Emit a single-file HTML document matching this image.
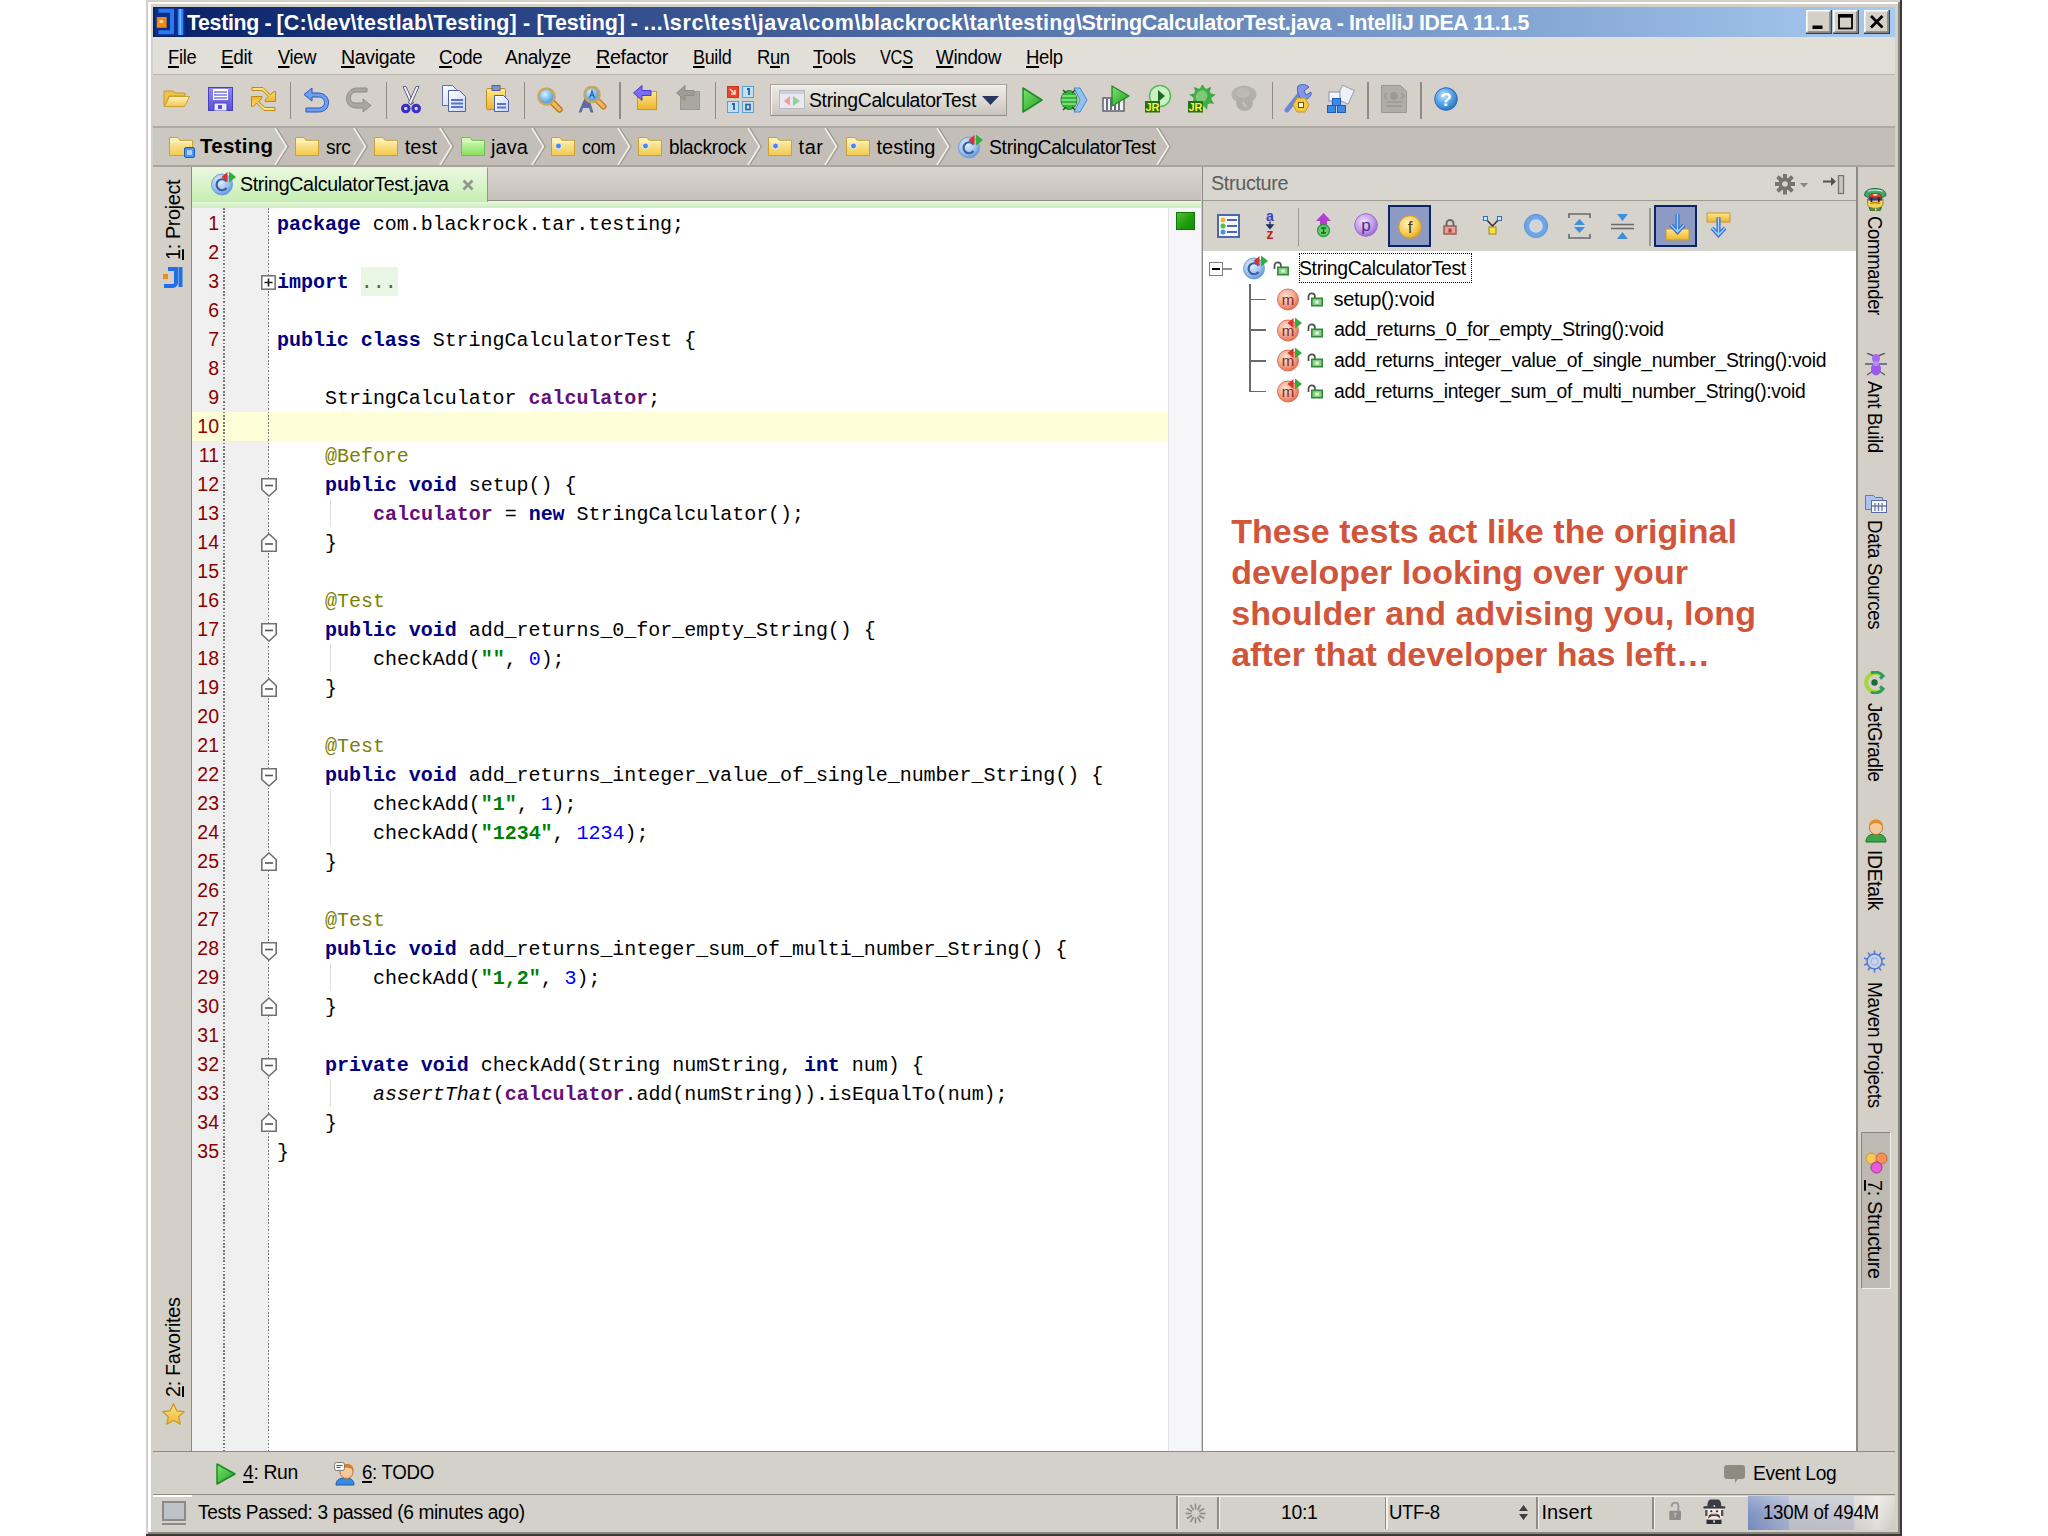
<!DOCTYPE html>
<html lang="en"><head><meta charset="utf-8"><title>Testing - IntelliJ IDEA 11.1.5</title>
<style>
html,body{margin:0;padding:0;background:#fff;}
body{width:2048px;height:1536px;position:relative;overflow:hidden;font-family:"Liberation Sans", "DejaVu Sans", sans-serif;font-size:19.5px;color:#000;}
.b{position:absolute;box-sizing:border-box;}
.t{position:absolute;white-space:pre;}
.m{font-family:"Liberation Mono", "DejaVu Sans Mono", monospace;}
u{text-decoration:underline;text-underline-offset:1.800px;text-decoration-thickness:1.500px;}
</style></head>
<body>
<div class="b" style="left:146px;top:0px;width:1755.8px;height:1536px;background:#d4d0c8;"></div>
<div class="b" style="left:148px;top:1.7px;width:2.5px;height:1530px;background:#ffffff;"></div>
<div class="b" style="left:148px;top:1.7px;width:1750px;height:2px;background:#ffffff;"></div>
<div class="b" style="left:1897.9px;top:2px;width:2.1px;height:1533px;background:#8a8680;"></div>
<div class="b" style="left:1899.9px;top:0px;width:1.9px;height:1536px;background:#3c3835;"></div>
<div class="b" style="left:148px;top:1532px;width:1752px;height:2.4px;background:#8a8680;"></div>
<div class="b" style="left:146px;top:1534.3px;width:1755.8px;height:1.7px;background:#3c3835;"></div>
<div class="b" style="left:153px;top:7px;width:1742px;height:30px;background:linear-gradient(90deg,#0a246a 0%,#0a246a 2%,#a6caf0 100%);"></div>
<div class="b" style="left:153px;top:37px;width:1742px;height:37px;background:#e2dfd8;"></div>
<div class="b" style="left:153px;top:74px;width:1742px;height:1px;background:#b9b5ae;"></div>
<div class="b" style="left:153px;top:75px;width:1742px;height:51px;background:#d5d1ca;"></div>
<div class="b" style="left:153px;top:126px;width:1742px;height:2px;background:#aeaaa3;"></div>
<div class="b" style="left:153px;top:128px;width:1742px;height:37px;background:#c3bfb8;"></div>
<div class="b" style="left:153px;top:165px;width:1742px;height:2px;background:#a9a59e;"></div>
<svg width="0" height="0" style="position:absolute"><defs><linearGradient id="gFold" x1="0" y1="0" x2="0" y2="1"><stop offset="0" stop-color="#fdf3bd"/><stop offset="1" stop-color="#f3c94d"/></linearGradient><linearGradient id="gFoldG" x1="0" y1="0" x2="0" y2="1"><stop offset="0" stop-color="#d9fbbf"/><stop offset="1" stop-color="#86e05e"/></linearGradient><linearGradient id="gSave" x1="0" y1="0" x2="0" y2="1"><stop offset="0" stop-color="#8f8bf5"/><stop offset="1" stop-color="#5a4fd8"/></linearGradient><linearGradient id="gBlue" x1="0" y1="0" x2="0" y2="1"><stop offset="0" stop-color="#8db8f5"/><stop offset="1" stop-color="#2d62c9"/></linearGradient><linearGradient id="gGreen" x1="0" y1="0" x2="1" y2="1"><stop offset="0" stop-color="#7be66f"/><stop offset="1" stop-color="#1f9a24"/></linearGradient><linearGradient id="gDoc" x1="0" y1="0" x2="1" y2="1"><stop offset="0" stop-color="#ffffff"/><stop offset="1" stop-color="#c9d6f7"/></linearGradient><linearGradient id="gYel" x1="0" y1="0" x2="0" y2="1"><stop offset="0" stop-color="#fde88a"/><stop offset="1" stop-color="#eeb52f"/></linearGradient><radialGradient id="rCls" cx="0.4" cy="0.35" r="0.7"><stop offset="0" stop-color="#e4f0fd"/><stop offset="0.6" stop-color="#9fc4ee"/><stop offset="1" stop-color="#5c8fd6"/></radialGradient><radialGradient id="rMeth" cx="0.4" cy="0.35" r="0.7"><stop offset="0" stop-color="#fde3d8"/><stop offset="0.55" stop-color="#f6a991"/><stop offset="1" stop-color="#e0684c"/></radialGradient><radialGradient id="rHelp" cx="0.4" cy="0.35" r="0.7"><stop offset="0" stop-color="#bfe3fb"/><stop offset="0.5" stop-color="#5aa8e6"/><stop offset="1" stop-color="#2a6dc0"/></radialGradient><radialGradient id="rP" cx="0.4" cy="0.35" r="0.7"><stop offset="0" stop-color="#efe0fb"/><stop offset="0.6" stop-color="#c39be8"/><stop offset="1" stop-color="#9a63cf"/></radialGradient><radialGradient id="rF" cx="0.4" cy="0.35" r="0.7"><stop offset="0" stop-color="#fff3c2"/><stop offset="0.6" stop-color="#f7cf57"/><stop offset="1" stop-color="#e3a21c"/></radialGradient><radialGradient id="rLens" cx="0.4" cy="0.35" r="0.7"><stop offset="0" stop-color="#d9f0ff"/><stop offset="0.6" stop-color="#6db7ee"/><stop offset="1" stop-color="#3d8bd6"/></radialGradient><linearGradient id="gCombo" x1="0" y1="0" x2="0" y2="1"><stop offset="0" stop-color="#eceae4"/><stop offset="0.5" stop-color="#dedbd4"/><stop offset="1" stop-color="#cbc7bf"/></linearGradient></defs></svg>
<svg class="b" style="left:154.8px;top:8px;" width="30" height="28" viewBox="0 0 30 28"><rect x="0" y="0" width="30" height="28" fill="#0c2c86"/><path d="M3.500 2.800h13.500v21.500H3.500" fill="none" stroke="#2a78f2" stroke-width="4"/><rect x="22.800" y="1" width="5.500" height="26" fill="#2f84ff"/><rect x="24.500" y="1" width="1.500" height="26" fill="#7fb8ff"/><rect x="1.800" y="9" width="9.800" height="10.800" fill="#f08a14"/><rect x="4.500" y="12" width="3.500" height="3" fill="#ffd28a"/></svg>
<span class="t ttl" style="left:186.8px;top:13.1px;font-size:21.5px;line-height:21.5px;color:#fff;font-weight:bold;letter-spacing:-0.350px;transform-origin:0 0;transform:scaleX(0.992);">Testing - </span>
<span class="t ttl" style="left:276.5px;top:13.1px;font-size:21.5px;line-height:21.5px;color:#fff;font-weight:bold;letter-spacing:0.177px;">[C:\dev\testlab\Testing] - </span>
<span class="t ttl" style="left:536.5px;top:13.1px;font-size:21.5px;line-height:21.5px;color:#fff;font-weight:bold;letter-spacing:-0.098px;">[Testing] - </span>
<span class="t ttl" style="left:643.6px;top:13.1px;font-size:21.5px;line-height:21.5px;color:#fff;font-weight:bold;letter-spacing:0.596px;">...\src\test\java\com</span>
<span class="t ttl" style="left:854.5px;top:13.1px;font-size:21.5px;line-height:21.5px;color:#fff;font-weight:bold;letter-spacing:0.233px;">\blackrock\tar\testing</span>
<span class="t ttl" style="left:1075.9px;top:13.1px;font-size:21.5px;line-height:21.5px;color:#fff;font-weight:bold;letter-spacing:-0.326px;">\StringCalculatorTest.java - </span>
<span class="t ttl" style="left:1349.2px;top:13.1px;font-size:21.5px;line-height:21.5px;color:#fff;font-weight:bold;letter-spacing:-0.350px;transform-origin:0 0;transform:scaleX(0.987);">IntelliJ IDEA 11.1.5</span>
<svg class="b" style="left:1806px;top:10px;" width="26" height="24" viewBox="0 0 26 24"><rect x="0" y="0" width="26" height="24" fill="#d4d0c8"/><path d="M0.800 23.500V0.800h24.700" stroke="#fff" stroke-width="1.600" fill="none"/><path d="M25.300 0v23.300H0" stroke="#404040" stroke-width="1.500" fill="none"/><path d="M23.900 1.600v20.300H1.600" stroke="#808080" stroke-width="1.400" fill="none"/><rect x="6.500" y="15.500" width="10" height="3.500" fill="#000"/></svg>
<svg class="b" style="left:1833px;top:10px;" width="26" height="24" viewBox="0 0 26 24"><rect x="0" y="0" width="26" height="24" fill="#d4d0c8"/><path d="M0.800 23.500V0.800h24.700" stroke="#fff" stroke-width="1.600" fill="none"/><path d="M25.300 0v23.300H0" stroke="#404040" stroke-width="1.500" fill="none"/><path d="M23.900 1.600v20.300H1.600" stroke="#808080" stroke-width="1.400" fill="none"/><rect x="6" y="5" width="13" height="13.500" fill="none" stroke="#000" stroke-width="1.800"/><rect x="5.100" y="4" width="14.800" height="3.600" fill="#000"/></svg>
<svg class="b" style="left:1864px;top:10px;" width="26" height="24" viewBox="0 0 26 24"><rect x="0" y="0" width="26" height="24" fill="#d4d0c8"/><path d="M0.800 23.500V0.800h24.700" stroke="#fff" stroke-width="1.600" fill="none"/><path d="M25.300 0v23.300H0" stroke="#404040" stroke-width="1.500" fill="none"/><path d="M23.900 1.600v20.300H1.600" stroke="#808080" stroke-width="1.400" fill="none"/><path d="M7 6l11.500 11.500M18.500 6 7 17.500" stroke="#000" stroke-width="2.800"/></svg>
<span class="t mn" style="left:168.4px;top:47.4px;font-size:20px;line-height:20px;letter-spacing:-0.350px;transform-origin:0 0;transform:scaleX(0.916);"><u>F</u>ile</span>
<span class="t mn" style="left:221.4px;top:47.4px;font-size:20px;line-height:20px;letter-spacing:-0.350px;transform-origin:0 0;transform:scaleX(0.945);"><u>E</u>dit</span>
<span class="t mn" style="left:278.0px;top:47.4px;font-size:20px;line-height:20px;letter-spacing:-0.350px;transform-origin:0 0;transform:scaleX(0.915);"><u>V</u>iew</span>
<span class="t mn" style="left:341.4px;top:47.4px;font-size:20px;line-height:20px;letter-spacing:-0.350px;transform-origin:0 0;transform:scaleX(0.975);"><u>N</u>avigate</span>
<span class="t mn" style="left:438.6px;top:47.4px;font-size:20px;line-height:20px;letter-spacing:-0.350px;transform-origin:0 0;transform:scaleX(0.932);"><u>C</u>ode</span>
<span class="t mn" style="left:505.0px;top:47.4px;font-size:20px;line-height:20px;letter-spacing:-0.350px;transform-origin:0 0;transform:scaleX(0.956);">Analy<u>z</u>e</span>
<span class="t mn" style="left:595.7px;top:47.4px;font-size:20px;line-height:20px;letter-spacing:-0.350px;transform-origin:0 0;transform:scaleX(0.988);"><u>R</u>efactor</span>
<span class="t mn" style="left:693.0px;top:47.4px;font-size:20px;line-height:20px;letter-spacing:-0.350px;transform-origin:0 0;transform:scaleX(0.897);"><u>B</u>uild</span>
<span class="t mn" style="left:756.5px;top:47.4px;font-size:20px;line-height:20px;letter-spacing:-0.350px;transform-origin:0 0;transform:scaleX(0.919);">R<u>u</u>n</span>
<span class="t mn" style="left:813.4px;top:47.4px;font-size:20px;line-height:20px;letter-spacing:-0.350px;transform-origin:0 0;transform:scaleX(0.951);"><u>T</u>ools</span>
<span class="t mn" style="left:879.7px;top:47.4px;font-size:20px;line-height:20px;letter-spacing:-0.350px;transform-origin:0 0;transform:scaleX(0.817);">VC<u>S</u></span>
<span class="t mn" style="left:936.0px;top:47.4px;font-size:20px;line-height:20px;letter-spacing:-0.350px;transform-origin:0 0;transform:scaleX(0.941);"><u>W</u>indow</span>
<span class="t mn" style="left:1026.3px;top:47.4px;font-size:20px;line-height:20px;letter-spacing:-0.350px;transform-origin:0 0;transform:scaleX(0.927);"><u>H</u>elp</span>
<svg class="b" style="left:163px;top:88px;" width="28" height="20" viewBox="0 0 28 20"><path d="M1 3h9l2 2h10v3H6l-4 10H1z" fill="#f0c24a" stroke="#c39a2d"/><path d="M6.5 8.5h20l-5 10H1.5z" fill="url(#gFold)" stroke="#c9a135"/></svg>
<svg class="b" style="left:207.5px;top:87px;" width="25" height="24" viewBox="0 0 25 24"><rect x="0.5" y="0.5" width="24" height="23" fill="url(#gSave)" stroke="#4a40b8"/><rect x="5" y="2" width="15" height="11" fill="#fff"/><path d="M6 5h13M6 8h13M6 11h13" stroke="#7a74e8" stroke-width="1.6"/><rect x="6" y="16" width="13" height="8" fill="#e9e7fb" stroke="#4a40b8"/><rect x="10" y="18" width="4" height="4" fill="#5a4fd8"/></svg>
<svg class="b" style="left:251px;top:86.8px;" width="25" height="24" viewBox="0 0 25 24"><path d="M1 0.500h11l7.500 7.500 2.500-3 2.500-0.500v10h-10.500l0.500-2.500 3-2.500-6.500-6h-10z" fill="url(#gYel)" stroke="#b98a1e" stroke-linejoin="round"/><g transform="rotate(180 12.500 12)"><path d="M1 0.500h11l7.500 7.500 2.500-3 2.500-0.500v10h-10.500l0.500-2.500 3-2.500-6.500-6h-10z" fill="url(#gYel)" stroke="#b98a1e" stroke-linejoin="round"/></g></svg>
<div class="b" style="left:289.8px;top:82px;width:1.500px;height:37px;background:#8f8c86;"></div>
<svg class="b" style="left:303px;top:87px;" width="27" height="26" viewBox="0 0 27 26"><path d="M9 1 1 7.5 9 14v-4h6c4 0 6.5 2 6.5 5.5S19 21 15 21H3v4h12c7 0 10.500-4 10.500-9.500S21 6 15 6H9z" fill="#6c9ff0" stroke="#2c55b8" stroke-linejoin="round"/></svg>
<svg class="b" style="left:345.5px;top:87px;" width="27" height="26" viewBox="0 0 27 26"><g transform="translate(26,0) scale(-1,1)"><path d="M9 12 1 18.500 9 25v-4h6c7 0 10.500-4 10.500-9.500S21 1 15 1H5v4h10c4 0 6.500 2 6.500 6S19 16 15 16H9z" fill="#a9a6a0" stroke="#8f8c86" stroke-linejoin="round"/></g></svg>
<div class="b" style="left:385.8px;top:82px;width:1.500px;height:37px;background:#8f8c86;"></div>
<svg class="b" style="left:400.5px;top:85.5px;" width="20" height="28" viewBox="0 0 20 28"><path d="M2 0.500 5 0.500 12.500 17 10 18.500z" fill="#f4f6fd" stroke="#5d5f78" stroke-width="1"/><path d="M18 0.500 15 0.500 7.500 17 10 18.500z" fill="#f4f6fd" stroke="#5d5f78" stroke-width="1"/><circle cx="4.800" cy="22.500" r="3.300" fill="#cfd0f5" stroke="#3a2fc0" stroke-width="3"/><circle cx="15.200" cy="22.500" r="3.300" fill="#cfd0f5" stroke="#3a2fc0" stroke-width="3"/></svg>
<svg class="b" style="left:441.5px;top:85px;" width="25" height="28" viewBox="0 0 25 28"><path d="M0.500 0.500h10l4 4v16h-14z" fill="url(#gDoc)" stroke="#5d6fb5"/><path d="M6.500 5.500h11l6 6v15h-17z" fill="url(#gDoc)" stroke="#4d5fa8"/><path d="M9 15h12M9 18.500h12M9 22h12" stroke="#5b73c9" stroke-width="1.800"/></svg>
<svg class="b" style="left:485.5px;top:85px;" width="24" height="28" viewBox="0 0 24 28"><rect x="0.500" y="3.500" width="19" height="21" rx="1" fill="url(#gYel)" stroke="#b98c2a"/><rect x="6" y="0.500" width="8" height="5" fill="#8a8fc8" stroke="#4d5fa8"/><path d="M8.500 10.500h9l5 5v11h-14z" fill="url(#gDoc)" stroke="#4d5fa8"/><path d="M11 19h9M11 22.500h9" stroke="#5b73c9" stroke-width="1.800"/></svg>
<div class="b" style="left:523.8px;top:82px;width:1.500px;height:37px;background:#8f8c86;"></div>
<svg class="b" style="left:537px;top:86.5px;" width="27" height="27" viewBox="0 0 27 27"><path d="M16 16l6.500 6.500" stroke="#b57a2a" stroke-width="6.500" stroke-linecap="round"/><path d="M16 16l6.500 6.500" stroke="#f3b55a" stroke-width="3.800" stroke-linecap="round"/><circle cx="9.500" cy="9.500" r="8" fill="url(#rLens)" stroke="#c9a660" stroke-width="2.600"/></svg>
<svg class="b" style="left:577.5px;top:86px;" width="29" height="27" viewBox="0 0 29 27"><path d="M0.500 26.500 7 11h3.500l5 15.500h-3l-1.300-4.500H5l-1.500 4.500z" fill="#5e6ba8"/><path d="M20 15l5.500 5.500" stroke="#b57a2a" stroke-width="6" stroke-linecap="round"/><path d="M20 15l5.500 5.500" stroke="#f3b55a" stroke-width="3.400" stroke-linecap="round"/><circle cx="14" cy="8.500" r="7.500" fill="url(#rLens)" stroke="#c9a660" stroke-width="2.600"/><path d="M11.500 12 14 5l2.500 7M12.500 9.500h3" stroke="#2f5fae" stroke-width="1.300" fill="none"/></svg>
<div class="b" style="left:619.3px;top:82px;width:1.500px;height:37px;background:#8f8c86;"></div>
<svg class="b" style="left:632.5px;top:85px;" width="25" height="26" viewBox="0 0 25 26"><rect x="4.500" y="6.500" width="19" height="18" fill="url(#gYel)" stroke="#c49a2e"/><path d="M9 0.500 0.500 8 9 15.500v-5h9v-5H9z" fill="#7c6df0" stroke="#4a3cc8" stroke-linejoin="round"/></svg>
<svg class="b" style="left:675.5px;top:85px;" width="25" height="26" viewBox="0 0 25 26"><rect x="4.500" y="6.500" width="19" height="18" fill="#aaa7a1" stroke="#9a9791"/><path d="M9 0.500 0.500 8 9 15.500v-5h9v-5H9z" fill="#9f9c96" stroke="#8f8c86" stroke-linejoin="round"/></svg>
<div class="b" style="left:714.8px;top:82px;width:1.500px;height:37px;background:#8f8c86;"></div>
<svg class="b" style="left:727px;top:85.5px;" width="27" height="27" viewBox="0 0 27 27"><rect x="0.500" y="0.500" width="11" height="11" fill="#e8452c" stroke="#c23a22"/><path d="M3 3l5 5M8 4v4H4" stroke="#ffd9c9" stroke-width="1.600" fill="none"/><rect x="15.500" y="0.500" width="11" height="11" fill="#bfe0f5" stroke="#5f9fc9"/><rect x="0.500" y="15.500" width="11" height="11" fill="#bfe0f5" stroke="#5f9fc9"/><rect x="15.500" y="15.500" width="11" height="11" fill="#bfe0f5" stroke="#5f9fc9"/><path d="M20 3h2v6M5 18h2v6" stroke="#2f5f9a" stroke-width="1.800" fill="none"/><rect x="19" y="18.500" width="4" height="5" fill="none" stroke="#2f5f9a" stroke-width="1.600"/></svg>
<div class="b" style="left:770px;top:84px;width:237px;height:32px;background:linear-gradient(#edebe5,#dcd9d2 55%,#c9c5bd);border:1px solid #a7a49d;border-bottom-color:#8f8c86;border-right-color:#9a9791;box-shadow:inset 1px 1px 0 #f6f5f1;"></div>
<svg class="b" style="left:778.5px;top:89.5px;" width="26" height="19" viewBox="0 0 26 19"><rect x="0.500" y="0.500" width="25" height="18" fill="#e9e8ee" stroke="#b9b7c0"/><rect x="1" y="1" width="24" height="3" fill="#c9cfe6"/><path d="M11 6v10l-6-5z" fill="#f0a09a"/><path d="M14 6v10l7-5z" fill="#8fd39a"/></svg>
<span class="t sct" style="left:808.6px;top:89.6px;font-size:20px;line-height:20px;letter-spacing:-0.350px;transform-origin:0 0;transform:scaleX(0.971);">StringCalculatorTest</span>
<svg class="b" style="left:982px;top:95.5px;" width="17" height="9" viewBox="0 0 17 9"><path d="M0 0h17L8.500 9z" fill="#27375f"/></svg>
<svg class="b" style="left:1022px;top:86.5px;" width="21" height="26" viewBox="0 0 21 26"><path d="M1 1 20 13.0 1 25z" fill="url(#gGreen)" stroke="#1e8a22" stroke-width="1.500" stroke-linejoin="round"/></svg>
<svg class="b" style="left:1059.5px;top:86.5px;" width="28" height="26" viewBox="0 0 28 26"><path d="M14 1h6l7 12-7 12h-6l6-12z" fill="#8fc3f2" stroke="#4a86d0"/><ellipse cx="9" cy="13" rx="8" ry="9.500" fill="#35b53a" stroke="#1e7a24"/><path d="M2 9h14M1.500 13h15M2 17h14" stroke="#8ee68a" stroke-width="1.600"/><path d="M3 3 6 6M3 23l3-3M15 3l-3 3M15 23l-3-3" stroke="#2a5a2c" stroke-width="1.500"/></svg>
<svg class="b" style="left:1102px;top:85px;" width="28" height="27" viewBox="0 0 28 27"><rect x="1" y="13" width="21" height="13" fill="#f2f2f2" stroke="#5c6070" stroke-width="1.500"/><path d="M5 14v11M9 14v11M13 14v11M17 14v11" stroke="#5c6070" stroke-width="1.800"/><path d="M10 1 27 11 10 21z" fill="url(#gGreen)" stroke="#1e8a22" stroke-width="1.300" stroke-linejoin="round"/></svg>
<svg class="b" style="left:1145px;top:85px;" width="27" height="28" viewBox="0 0 27 28"><circle cx="15" cy="11" r="10.500" fill="#c9efc2" stroke="#59b85a" stroke-width="1.500"/><path d="M13 5 20 11 13 17z" fill="#1d6a22"/><rect x="0" y="16" width="15" height="11.500" fill="#256f14"/><text x="7.500" y="26" font-family="Liberation Sans, sans-serif" font-size="11" font-weight="bold" fill="#f6f23a" text-anchor="middle">JR</text></svg>
<svg class="b" style="left:1187.5px;top:85px;" width="28" height="28" viewBox="0 0 28 28"><path d="M14.500 -1.500 17 4h-5z" transform="rotate(0 14.500 12)" fill="#35a83c"/><path d="M14.500 -1.500 17 4h-5z" transform="rotate(40 14.500 12)" fill="#35a83c"/><path d="M14.500 -1.500 17 4h-5z" transform="rotate(80 14.500 12)" fill="#35a83c"/><path d="M14.500 -1.500 17 4h-5z" transform="rotate(120 14.500 12)" fill="#35a83c"/><path d="M14.500 -1.500 17 4h-5z" transform="rotate(160 14.500 12)" fill="#35a83c"/><path d="M14.500 -1.500 17 4h-5z" transform="rotate(200 14.500 12)" fill="#35a83c"/><path d="M14.500 -1.500 17 4h-5z" transform="rotate(240 14.500 12)" fill="#35a83c"/><path d="M14.500 -1.500 17 4h-5z" transform="rotate(280 14.500 12)" fill="#35a83c"/><path d="M14.500 -1.500 17 4h-5z" transform="rotate(320 14.500 12)" fill="#35a83c"/><circle cx="14.500" cy="12" r="9.300" fill="#3fae45"/><ellipse cx="13.500" cy="11.500" rx="5.500" ry="6.500" transform="rotate(35 13.500 11.500)" fill="#7cc97a"/><rect x="0" y="16" width="15" height="11.500" fill="#256f14"/><text x="7.500" y="26" font-family="Liberation Sans, sans-serif" font-size="11" font-weight="bold" fill="#f6f23a" text-anchor="middle">JR</text></svg>
<svg class="b" style="left:1231px;top:85px;" width="27" height="27" viewBox="0 0 27 27"><ellipse cx="13" cy="9.500" rx="12.500" ry="9" fill="#b4b1ab"/><ellipse cx="13.500" cy="18" rx="8.500" ry="8" fill="#b0ada7"/><ellipse cx="12" cy="8" rx="7" ry="5" fill="#bcb9b3"/><path d="M12 17l3 5" stroke="#c9c6c0" stroke-width="2"/></svg>
<div class="b" style="left:1271.8px;top:82px;width:1.500px;height:37px;background:#8f8c86;"></div>
<svg class="b" style="left:1283.5px;top:84px;" width="28" height="29" viewBox="0 0 28 29"><path d="M3 26 16 10" stroke="#6f86d8" stroke-width="5" stroke-linecap="round"/><path d="M14 2c3-2 8-2 11 1l-5 4 2 4 5-3c1 4-3 8-8 7-4-1-7-7-5-13z" fill="#7f97e6" stroke="#4a62c0"/><path d="M13 14h8l4 7-4 7h-8l-4-7z" fill="#f4c93a" stroke="#c9962a"/><rect x="14.500" y="18.500" width="5" height="5" fill="#fff6d0" stroke="#6a5a1a"/></svg>
<svg class="b" style="left:1325.5px;top:84.5px;" width="29" height="28" viewBox="0 0 29 28"><rect x="13" y="2" width="13" height="15" transform="rotate(25 19 9)" fill="#eef1f8" stroke="#9a9fb0"/><rect x="3" y="7" width="11" height="9" fill="#f5f6fb" stroke="#8a8fa5"/><rect x="6.500" y="13.500" width="8" height="7" fill="#3b8ae6" stroke="#1d5cb8"/><rect x="1.500" y="20.500" width="8" height="7" fill="#3b8ae6" stroke="#1d5cb8"/><rect x="11.500" y="20.500" width="8" height="7" fill="#3b8ae6" stroke="#1d5cb8"/></svg>
<div class="b" style="left:1367.3px;top:82px;width:1.500px;height:37px;background:#8f8c86;"></div>
<svg class="b" style="left:1381px;top:85px;" width="26" height="28" viewBox="0 0 26 28"><path d="M0.500 0.500h19l6 6v21h-25z" fill="#b0ada7" stroke="#9a9791"/><circle cx="13" cy="11" r="4" fill="#9d9a94"/><path d="M5 17h16M5 21h16" stroke="#9a9791" stroke-width="1.500"/><path d="M6 8 3 11l3 3M20 8l3 3-3 3" stroke="#9a9791" stroke-width="1.300" fill="none"/></svg>
<div class="b" style="left:1420.3px;top:82px;width:1.500px;height:37px;background:#8f8c86;"></div>
<svg class="b" style="left:1433.5px;top:87px;" width="24" height="24" viewBox="0 0 24 24"><circle cx="12" cy="12" r="11.300" fill="url(#rHelp)" stroke="#2a6dc0"/><text x="12" y="19" font-family="Liberation Sans, sans-serif" font-size="19" font-weight="bold" fill="#fff" text-anchor="middle">?</text></svg>
<div class="b" style="left:153px;top:128px;width:134px;height:37px;background:#cbc8c1;clip-path:polygon(0 0,122px 0,133.500px 50%,122px 100%,0 100%);"></div>
<svg class="b" style="left:168.5px;top:135px;" width="27" height="24" viewBox="0 0 27 24"><path d="M0.500 2.500h8.500l2 2.800h12.500v15.200h-23z" fill="url(#gFold)" stroke="#c9a135"/><path d="M1.500 6.800h21" stroke="#fffbe0" stroke-width="1" opacity="0.800"/><rect x="15.500" y="12.500" width="10" height="10" rx="1.500" fill="#4f95ea" stroke="#1f5cb8"/><rect x="18" y="15" width="5" height="5" fill="#a9d0fa"/></svg>
<span class="t nv" style="left:200.0px;top:136.1px;font-size:20.5px;line-height:20.5px;font-weight:bold;letter-spacing:0.271px;">Testing</span>
<svg class="b" style="left:274.0px;top:128px;" width="16" height="37" viewBox="0 0 16 37"><path d="M1 0 12.500 18.500 1 37" fill="none" stroke="#f3f1ec" stroke-width="1.600"/><path d="M2.800 0 14.300 18.500 2.800 37" fill="none" stroke="#9d9992" stroke-width="1.200"/></svg>
<svg class="b" style="left:295px;top:135px;" width="24" height="24" viewBox="0 0 24 24"><path d="M0.500 2.500h8.500l2 2.800h12.500v15.200h-23z" fill="url(#gFold)" stroke="#c9a135"/><path d="M1.500 6.800h21" stroke="#fffbe0" stroke-width="1" opacity="0.800"/></svg>
<span class="t nv" style="left:325.8px;top:136.6px;font-size:20px;line-height:20px;letter-spacing:-0.350px;transform-origin:0 0;transform:scaleX(0.962);">src</span>
<svg class="b" style="left:352.9px;top:128px;" width="16" height="37" viewBox="0 0 16 37"><path d="M1 0 12.500 18.500 1 37" fill="none" stroke="#f3f1ec" stroke-width="1.600"/><path d="M2.800 0 14.300 18.500 2.800 37" fill="none" stroke="#9d9992" stroke-width="1.200"/></svg>
<svg class="b" style="left:374px;top:135px;" width="24" height="24" viewBox="0 0 24 24"><path d="M0.500 2.500h8.500l2 2.800h12.500v15.200h-23z" fill="url(#gFold)" stroke="#c9a135"/><path d="M1.500 6.800h21" stroke="#fffbe0" stroke-width="1" opacity="0.800"/></svg>
<span class="t nv" style="left:404.7px;top:136.6px;font-size:20px;line-height:20px;letter-spacing:0.083px;">test</span>
<svg class="b" style="left:439.3px;top:128px;" width="16" height="37" viewBox="0 0 16 37"><path d="M1 0 12.500 18.500 1 37" fill="none" stroke="#f3f1ec" stroke-width="1.600"/><path d="M2.800 0 14.300 18.500 2.800 37" fill="none" stroke="#9d9992" stroke-width="1.200"/></svg>
<svg class="b" style="left:460.5px;top:135px;" width="24" height="24" viewBox="0 0 24 24"><path d="M0.500 2.500h8.500l2 2.800h12.500v15.200h-23z" fill="url(#gFoldG)" stroke="#6fbf4f"/><path d="M1.500 6.800h21" stroke="#fffbe0" stroke-width="1" opacity="0.800"/></svg>
<span class="t nv" style="left:491.0px;top:136.6px;font-size:20px;line-height:20px;letter-spacing:0.099px;">java</span>
<svg class="b" style="left:530.5px;top:128px;" width="16" height="37" viewBox="0 0 16 37"><path d="M1 0 12.500 18.500 1 37" fill="none" stroke="#f3f1ec" stroke-width="1.600"/><path d="M2.800 0 14.300 18.500 2.800 37" fill="none" stroke="#9d9992" stroke-width="1.200"/></svg>
<svg class="b" style="left:551px;top:135px;" width="24" height="24" viewBox="0 0 24 24"><path d="M0.500 2.500h8.500l2 2.800h12.500v15.200h-23z" fill="url(#gFold)" stroke="#c9a135"/><path d="M1.500 6.800h21" stroke="#fffbe0" stroke-width="1" opacity="0.800"/><circle cx="7.500" cy="11" r="3" fill="#4a8ae6" stroke="#e8f2ff" stroke-width="1"/></svg>
<span class="t nv" style="left:582.0px;top:136.6px;font-size:20px;line-height:20px;letter-spacing:-0.350px;transform-origin:0 0;transform:scaleX(0.902);">com</span>
<svg class="b" style="left:616.5px;top:128px;" width="16" height="37" viewBox="0 0 16 37"><path d="M1 0 12.500 18.500 1 37" fill="none" stroke="#f3f1ec" stroke-width="1.600"/><path d="M2.800 0 14.300 18.500 2.800 37" fill="none" stroke="#9d9992" stroke-width="1.200"/></svg>
<svg class="b" style="left:638px;top:135px;" width="24" height="24" viewBox="0 0 24 24"><path d="M0.500 2.500h8.500l2 2.800h12.500v15.200h-23z" fill="url(#gFold)" stroke="#c9a135"/><path d="M1.500 6.800h21" stroke="#fffbe0" stroke-width="1" opacity="0.800"/><circle cx="7.500" cy="11" r="3" fill="#4a8ae6" stroke="#e8f2ff" stroke-width="1"/></svg>
<span class="t nv" style="left:668.5px;top:136.6px;font-size:20px;line-height:20px;letter-spacing:-0.350px;transform-origin:0 0;transform:scaleX(0.949);">blackrock</span>
<svg class="b" style="left:746.5px;top:128px;" width="16" height="37" viewBox="0 0 16 37"><path d="M1 0 12.500 18.500 1 37" fill="none" stroke="#f3f1ec" stroke-width="1.600"/><path d="M2.800 0 14.300 18.500 2.800 37" fill="none" stroke="#9d9992" stroke-width="1.200"/></svg>
<svg class="b" style="left:768px;top:135px;" width="24" height="24" viewBox="0 0 24 24"><path d="M0.500 2.500h8.500l2 2.800h12.500v15.200h-23z" fill="url(#gFold)" stroke="#c9a135"/><path d="M1.500 6.800h21" stroke="#fffbe0" stroke-width="1" opacity="0.800"/><circle cx="7.500" cy="11" r="3" fill="#4a8ae6" stroke="#e8f2ff" stroke-width="1"/></svg>
<span class="t nv" style="left:798.5px;top:136.6px;font-size:20px;line-height:20px;letter-spacing:0.578px;">tar</span>
<svg class="b" style="left:823.5px;top:128px;" width="16" height="37" viewBox="0 0 16 37"><path d="M1 0 12.500 18.500 1 37" fill="none" stroke="#f3f1ec" stroke-width="1.600"/><path d="M2.800 0 14.300 18.500 2.800 37" fill="none" stroke="#9d9992" stroke-width="1.200"/></svg>
<svg class="b" style="left:846px;top:135px;" width="24" height="24" viewBox="0 0 24 24"><path d="M0.500 2.500h8.500l2 2.800h12.500v15.200h-23z" fill="url(#gFold)" stroke="#c9a135"/><path d="M1.500 6.800h21" stroke="#fffbe0" stroke-width="1" opacity="0.800"/><circle cx="7.500" cy="11" r="3" fill="#4a8ae6" stroke="#e8f2ff" stroke-width="1"/></svg>
<span class="t nv" style="left:876.5px;top:136.6px;font-size:20px;line-height:20px;letter-spacing:0.010px;">testing</span>
<svg class="b" style="left:935.5px;top:128px;" width="16" height="37" viewBox="0 0 16 37"><path d="M1 0 12.500 18.500 1 37" fill="none" stroke="#f3f1ec" stroke-width="1.600"/><path d="M2.800 0 14.300 18.500 2.800 37" fill="none" stroke="#9d9992" stroke-width="1.200"/></svg>
<svg class="b" style="left:958px;top:134px;" width="26" height="25" viewBox="0 0 26 25"><circle cx="11" cy="13.500" r="10.500" fill="url(#rCls)" stroke="#6f9fe0"/><path d="M15.500 10.500a5.500 5.500 0 1 0 0 6.500" fill="none" stroke="#3d5fa8" stroke-width="2.200"/><path d="M16.500 1v10l-6-5z" fill="#e0302a"/><path d="M18 0.500v11l7-5.500z" fill="#2fae3a"/></svg>
<span class="t nv" style="left:988.5px;top:136.6px;font-size:20px;line-height:20px;letter-spacing:-0.350px;transform-origin:0 0;transform:scaleX(0.969);">StringCalculatorTest</span>
<svg class="b" style="left:1155.5px;top:128px;" width="16" height="37" viewBox="0 0 16 37"><path d="M1 0 12.500 18.500 1 37" fill="none" stroke="#f3f1ec" stroke-width="1.600"/><path d="M2.800 0 14.300 18.500 2.800 37" fill="none" stroke="#9d9992" stroke-width="1.200"/></svg>
<div class="b" style="left:153px;top:167px;width:38px;height:1284px;background:#d4d0c8;"></div>
<div class="b" style="left:191px;top:167px;width:1px;height:1284px;background:#8c8a85;"></div>
<div class="b" style="left:192px;top:167px;width:1009px;height:33px;background:linear-gradient(#d9d5ce,#c6c2bb);"></div>
<div class="b" style="left:192px;top:199.5px;width:1009px;height:1.5px;background:#8f8c86;"></div>
<div class="b" style="left:192px;top:201px;width:1009px;height:7px;background:linear-gradient(#edf9e6,#d9f2cc 50%,#cdeebd);"></div>
<div class="b" style="left:192px;top:167px;width:296px;height:35px;background:linear-gradient(#eaf8e0,#d5f2c5 60%,#c6edb2);border-right:1px solid #8f9a88;border-top:1px solid #e9f3e2;"></div>
<svg class="b" style="left:211px;top:170.5px;" width="26" height="25" viewBox="0 0 26 25"><circle cx="11" cy="13.500" r="10.500" fill="url(#rCls)" stroke="#6f9fe0"/><path d="M15.500 10.500a5.500 5.500 0 1 0 0 6.500" fill="none" stroke="#3d5fa8" stroke-width="2.200"/><path d="M16.500 1v10l-6-5z" fill="#e0302a"/><path d="M18 0.500v11l7-5.500z" fill="#2fae3a"/></svg>
<span class="t" style="left:240.0px;top:174.1px;font-size:20px;line-height:20px;letter-spacing:-0.350px;transform-origin:0 0;transform:scaleX(0.982);">StringCalculatorTest.java</span>
<svg class="b" style="left:462px;top:179px;" width="12" height="12" viewBox="0 0 12 12"><path d="M1.500 1.500l9 9M10.500 1.500l-9 9" stroke="#8f9690" stroke-width="2.600"/></svg>
<div class="b" style="left:192px;top:208px;width:976px;height:1243px;background:#fff;"></div>
<div class="b" style="left:192px;top:208px;width:77px;height:1243px;background:#f0f0f0;"></div>
<div class="b" style="left:192px;top:411.5px;width:976px;height:29px;background:#ffffd7;"></div>
<div class="b" style="left:223.2px;top:208px;width:1.5px;height:1243px;background:repeating-linear-gradient(#767676 0 1.700px,transparent 1.700px 3.450px);"></div>
<div class="b" style="left:267.7px;top:208px;width:1.5px;height:1243px;background:repeating-linear-gradient(#767676 0 1.700px,transparent 1.700px 3.450px);"></div>
<div class="b" style="left:1168px;top:208px;width:33px;height:1243px;background:#f6f5f8;"></div>
<div class="b" style="left:1168px;top:208px;width:1px;height:1243px;background:#e3e3e3;"></div>
<div class="b" style="left:1176px;top:212px;width:19px;height:18px;background:linear-gradient(135deg,#4fc232,#1f9a0c 60%,#1a8f08);border:1.500px solid #0e7806;"></div>
<div class="b" style="left:329.5px;top:499px;width:1.5px;height:28px;background:#dedede;"></div>
<div class="b" style="left:329.5px;top:644px;width:1.5px;height:28px;background:#dedede;"></div>
<div class="b" style="left:329.5px;top:789px;width:1.5px;height:57px;background:#dedede;"></div>
<div class="b" style="left:329.5px;top:963px;width:1.5px;height:28px;background:#dedede;"></div>
<div class="b" style="left:329.5px;top:1079px;width:1.5px;height:28px;background:#dedede;"></div>
<div class="b" style="left:361px;top:266.5px;width:36.5px;height:29px;background:#e8f6e3;"></div>
<span class="t ln" style="left:0.0px;top:213.5px;font-size:19.5px;line-height:19.5px;color:#8b0000;left:auto;right:1829px;">1</span>
<span class="t m cd" style="left:277.0px;top:214.7px;font-size:20px;line-height:20px;letter-spacing:-0.030px;"><b style="color:#000080">package</b> com.blackrock.tar.testing;</span>
<span class="t ln" style="left:0.0px;top:242.5px;font-size:19.5px;line-height:19.5px;color:#8b0000;left:auto;right:1829px;">2</span>
<span class="t ln" style="left:0.0px;top:271.5px;font-size:19.5px;line-height:19.5px;color:#8b0000;left:auto;right:1829px;">3</span>
<span class="t m cd" style="left:277.0px;top:272.7px;font-size:20px;line-height:20px;letter-spacing:-0.030px;"><b style="color:#000080">import</b> <span style="color:#4f604f">...</span></span>
<svg class="b" style="left:260.8px;top:275px;" width="15" height="15" viewBox="0 0 15 15"><rect x="0.800" y="0.800" width="13.400" height="13.400" fill="#fff" stroke="#707070" stroke-width="1.500"/><path d="M3.500 7.500h8M7.500 3.500v8" stroke="#222" stroke-width="1.600"/></svg>
<span class="t ln" style="left:0.0px;top:300.5px;font-size:19.5px;line-height:19.5px;color:#8b0000;left:auto;right:1829px;">6</span>
<span class="t ln" style="left:0.0px;top:329.5px;font-size:19.5px;line-height:19.5px;color:#8b0000;left:auto;right:1829px;">7</span>
<span class="t m cd" style="left:277.0px;top:330.7px;font-size:20px;line-height:20px;letter-spacing:-0.030px;"><b style="color:#000080">public</b> <b style="color:#000080">class</b> StringCalculatorTest {</span>
<span class="t ln" style="left:0.0px;top:358.5px;font-size:19.5px;line-height:19.5px;color:#8b0000;left:auto;right:1829px;">8</span>
<span class="t ln" style="left:0.0px;top:387.5px;font-size:19.5px;line-height:19.5px;color:#8b0000;left:auto;right:1829px;">9</span>
<span class="t m cd" style="left:325.0px;top:388.7px;font-size:20px;line-height:20px;letter-spacing:-0.030px;">StringCalculator <b style="color:#660e7a">calculator</b>;</span>
<span class="t ln" style="left:0.0px;top:416.5px;font-size:19.5px;line-height:19.5px;color:#8b0000;left:auto;right:1829px;">10</span>
<span class="t ln" style="left:0.0px;top:445.5px;font-size:19.5px;line-height:19.5px;color:#8b0000;left:auto;right:1829px;">11</span>
<span class="t m cd" style="left:325.0px;top:446.7px;font-size:20px;line-height:20px;letter-spacing:-0.030px;"><span style="color:#808000">@Before</span></span>
<span class="t ln" style="left:0.0px;top:474.5px;font-size:19.5px;line-height:19.5px;color:#8b0000;left:auto;right:1829px;">12</span>
<span class="t m cd" style="left:325.0px;top:475.7px;font-size:20px;line-height:20px;letter-spacing:-0.030px;"><b style="color:#000080">public</b> <b style="color:#000080">void</b> setup() {</span>
<svg class="b" style="left:260.5px;top:477.7px;" width="16" height="19" viewBox="0 0 16 19"><path d="M0.800 0.800h14.400v10.700l-7.200 6.500-7.200-6.500z" fill="#fff" stroke="#707070" stroke-width="1.600"/><path d="M4 7.500h8" stroke="#555" stroke-width="1.600"/></svg>
<span class="t ln" style="left:0.0px;top:503.5px;font-size:19.5px;line-height:19.5px;color:#8b0000;left:auto;right:1829px;">13</span>
<span class="t m cd" style="left:373.0px;top:504.7px;font-size:20px;line-height:20px;letter-spacing:-0.030px;"><b style="color:#660e7a">calculator</b> = <b style="color:#000080">new</b> StringCalculator();</span>
<span class="t ln" style="left:0.0px;top:532.5px;font-size:19.5px;line-height:19.5px;color:#8b0000;left:auto;right:1829px;">14</span>
<span class="t m cd" style="left:325.0px;top:533.7px;font-size:20px;line-height:20px;letter-spacing:-0.030px;">}</span>
<svg class="b" style="left:260.5px;top:532.6px;" width="16" height="19" viewBox="0 0 16 19"><path d="M0.800 18.200h14.400v-10.700l-7.200-6.500-7.200 6.500z" fill="#fff" stroke="#707070" stroke-width="1.600"/><path d="M4 11h8" stroke="#555" stroke-width="1.600"/></svg>
<span class="t ln" style="left:0.0px;top:561.5px;font-size:19.5px;line-height:19.5px;color:#8b0000;left:auto;right:1829px;">15</span>
<span class="t ln" style="left:0.0px;top:590.5px;font-size:19.5px;line-height:19.5px;color:#8b0000;left:auto;right:1829px;">16</span>
<span class="t m cd" style="left:325.0px;top:591.7px;font-size:20px;line-height:20px;letter-spacing:-0.030px;"><span style="color:#808000">@Test</span></span>
<span class="t ln" style="left:0.0px;top:619.5px;font-size:19.5px;line-height:19.5px;color:#8b0000;left:auto;right:1829px;">17</span>
<span class="t m cd" style="left:325.0px;top:620.7px;font-size:20px;line-height:20px;letter-spacing:-0.030px;"><b style="color:#000080">public</b> <b style="color:#000080">void</b> add_returns_0_for_empty_String() {</span>
<svg class="b" style="left:260.5px;top:622.7px;" width="16" height="19" viewBox="0 0 16 19"><path d="M0.800 0.800h14.400v10.700l-7.200 6.500-7.200-6.500z" fill="#fff" stroke="#707070" stroke-width="1.600"/><path d="M4 7.500h8" stroke="#555" stroke-width="1.600"/></svg>
<span class="t ln" style="left:0.0px;top:648.5px;font-size:19.5px;line-height:19.5px;color:#8b0000;left:auto;right:1829px;">18</span>
<span class="t m cd" style="left:373.0px;top:649.7px;font-size:20px;line-height:20px;letter-spacing:-0.030px;">checkAdd(<b style="color:#008000">""</b>, <span style="color:#0000ff">0</span>);</span>
<span class="t ln" style="left:0.0px;top:677.5px;font-size:19.5px;line-height:19.5px;color:#8b0000;left:auto;right:1829px;">19</span>
<span class="t m cd" style="left:325.0px;top:678.7px;font-size:20px;line-height:20px;letter-spacing:-0.030px;">}</span>
<svg class="b" style="left:260.5px;top:677.6px;" width="16" height="19" viewBox="0 0 16 19"><path d="M0.800 18.200h14.400v-10.700l-7.200-6.500-7.200 6.500z" fill="#fff" stroke="#707070" stroke-width="1.600"/><path d="M4 11h8" stroke="#555" stroke-width="1.600"/></svg>
<span class="t ln" style="left:0.0px;top:706.5px;font-size:19.5px;line-height:19.5px;color:#8b0000;left:auto;right:1829px;">20</span>
<span class="t ln" style="left:0.0px;top:735.5px;font-size:19.5px;line-height:19.5px;color:#8b0000;left:auto;right:1829px;">21</span>
<span class="t m cd" style="left:325.0px;top:736.7px;font-size:20px;line-height:20px;letter-spacing:-0.030px;"><span style="color:#808000">@Test</span></span>
<span class="t ln" style="left:0.0px;top:764.5px;font-size:19.5px;line-height:19.5px;color:#8b0000;left:auto;right:1829px;">22</span>
<span class="t m cd" style="left:325.0px;top:765.7px;font-size:20px;line-height:20px;letter-spacing:-0.030px;"><b style="color:#000080">public</b> <b style="color:#000080">void</b> add_returns_integer_value_of_single_number_String() {</span>
<svg class="b" style="left:260.5px;top:767.7px;" width="16" height="19" viewBox="0 0 16 19"><path d="M0.800 0.800h14.400v10.700l-7.200 6.500-7.200-6.500z" fill="#fff" stroke="#707070" stroke-width="1.600"/><path d="M4 7.500h8" stroke="#555" stroke-width="1.600"/></svg>
<span class="t ln" style="left:0.0px;top:793.5px;font-size:19.5px;line-height:19.5px;color:#8b0000;left:auto;right:1829px;">23</span>
<span class="t m cd" style="left:373.0px;top:794.7px;font-size:20px;line-height:20px;letter-spacing:-0.030px;">checkAdd(<b style="color:#008000">"1"</b>, <span style="color:#0000ff">1</span>);</span>
<span class="t ln" style="left:0.0px;top:822.5px;font-size:19.5px;line-height:19.5px;color:#8b0000;left:auto;right:1829px;">24</span>
<span class="t m cd" style="left:373.0px;top:823.7px;font-size:20px;line-height:20px;letter-spacing:-0.030px;">checkAdd(<b style="color:#008000">"1234"</b>, <span style="color:#0000ff">1234</span>);</span>
<span class="t ln" style="left:0.0px;top:851.5px;font-size:19.5px;line-height:19.5px;color:#8b0000;left:auto;right:1829px;">25</span>
<span class="t m cd" style="left:325.0px;top:852.7px;font-size:20px;line-height:20px;letter-spacing:-0.030px;">}</span>
<svg class="b" style="left:260.5px;top:851.6px;" width="16" height="19" viewBox="0 0 16 19"><path d="M0.800 18.200h14.400v-10.700l-7.200-6.500-7.200 6.500z" fill="#fff" stroke="#707070" stroke-width="1.600"/><path d="M4 11h8" stroke="#555" stroke-width="1.600"/></svg>
<span class="t ln" style="left:0.0px;top:880.5px;font-size:19.5px;line-height:19.5px;color:#8b0000;left:auto;right:1829px;">26</span>
<span class="t ln" style="left:0.0px;top:909.5px;font-size:19.5px;line-height:19.5px;color:#8b0000;left:auto;right:1829px;">27</span>
<span class="t m cd" style="left:325.0px;top:910.7px;font-size:20px;line-height:20px;letter-spacing:-0.030px;"><span style="color:#808000">@Test</span></span>
<span class="t ln" style="left:0.0px;top:938.5px;font-size:19.5px;line-height:19.5px;color:#8b0000;left:auto;right:1829px;">28</span>
<span class="t m cd" style="left:325.0px;top:939.7px;font-size:20px;line-height:20px;letter-spacing:-0.030px;"><b style="color:#000080">public</b> <b style="color:#000080">void</b> add_returns_integer_sum_of_multi_number_String() {</span>
<svg class="b" style="left:260.5px;top:941.7px;" width="16" height="19" viewBox="0 0 16 19"><path d="M0.800 0.800h14.400v10.700l-7.200 6.500-7.200-6.500z" fill="#fff" stroke="#707070" stroke-width="1.600"/><path d="M4 7.500h8" stroke="#555" stroke-width="1.600"/></svg>
<span class="t ln" style="left:0.0px;top:967.5px;font-size:19.5px;line-height:19.5px;color:#8b0000;left:auto;right:1829px;">29</span>
<span class="t m cd" style="left:373.0px;top:968.7px;font-size:20px;line-height:20px;letter-spacing:-0.030px;">checkAdd(<b style="color:#008000">"1,2"</b>, <span style="color:#0000ff">3</span>);</span>
<span class="t ln" style="left:0.0px;top:996.5px;font-size:19.5px;line-height:19.5px;color:#8b0000;left:auto;right:1829px;">30</span>
<span class="t m cd" style="left:325.0px;top:997.7px;font-size:20px;line-height:20px;letter-spacing:-0.030px;">}</span>
<svg class="b" style="left:260.5px;top:996.6px;" width="16" height="19" viewBox="0 0 16 19"><path d="M0.800 18.200h14.400v-10.700l-7.200-6.500-7.200 6.500z" fill="#fff" stroke="#707070" stroke-width="1.600"/><path d="M4 11h8" stroke="#555" stroke-width="1.600"/></svg>
<span class="t ln" style="left:0.0px;top:1025.5px;font-size:19.5px;line-height:19.5px;color:#8b0000;left:auto;right:1829px;">31</span>
<span class="t ln" style="left:0.0px;top:1054.5px;font-size:19.5px;line-height:19.5px;color:#8b0000;left:auto;right:1829px;">32</span>
<span class="t m cd" style="left:325.0px;top:1055.7px;font-size:20px;line-height:20px;letter-spacing:-0.030px;"><b style="color:#000080">private</b> <b style="color:#000080">void</b> checkAdd(String numString, <b style="color:#000080">int</b> num) {</span>
<svg class="b" style="left:260.5px;top:1057.7px;" width="16" height="19" viewBox="0 0 16 19"><path d="M0.800 0.800h14.400v10.700l-7.200 6.500-7.200-6.500z" fill="#fff" stroke="#707070" stroke-width="1.600"/><path d="M4 7.500h8" stroke="#555" stroke-width="1.600"/></svg>
<span class="t ln" style="left:0.0px;top:1083.5px;font-size:19.5px;line-height:19.5px;color:#8b0000;left:auto;right:1829px;">33</span>
<span class="t m cd" style="left:373.0px;top:1084.7px;font-size:20px;line-height:20px;letter-spacing:-0.030px;"><i>assertThat</i>(<b style="color:#660e7a">calculator</b>.add(numString)).isEqualTo(num);</span>
<span class="t ln" style="left:0.0px;top:1112.5px;font-size:19.5px;line-height:19.5px;color:#8b0000;left:auto;right:1829px;">34</span>
<span class="t m cd" style="left:325.0px;top:1113.7px;font-size:20px;line-height:20px;letter-spacing:-0.030px;">}</span>
<svg class="b" style="left:260.5px;top:1112.6px;" width="16" height="19" viewBox="0 0 16 19"><path d="M0.800 18.200h14.400v-10.700l-7.200-6.500-7.200 6.500z" fill="#fff" stroke="#707070" stroke-width="1.600"/><path d="M4 11h8" stroke="#555" stroke-width="1.600"/></svg>
<span class="t ln" style="left:0.0px;top:1141.5px;font-size:19.5px;line-height:19.5px;color:#8b0000;left:auto;right:1829px;">35</span>
<span class="t m cd" style="left:277.0px;top:1142.7px;font-size:20px;line-height:20px;letter-spacing:-0.030px;">}</span>
<div class="b" style="left:1201.5px;top:167px;width:1.7px;height:1284px;background:#8c8a85;"></div>
<div class="b" style="left:1203px;top:167px;width:653px;height:33px;background:#d8d5ce;"></div>
<div class="b" style="left:1203px;top:199.5px;width:653px;height:1.5px;background:#9f9c96;"></div>
<span class="t" style="left:1210.6px;top:172.6px;font-size:20px;line-height:20px;color:#5c5c5c;letter-spacing:-0.350px;transform-origin:0 0;transform:scaleX(0.989);">Structure</span>
<svg class="b" style="left:1775px;top:174px;" width="20" height="21" viewBox="0 0 20 21"><g fill="#77746e"><circle cx="10" cy="10" r="6.500"/><rect x="8" y="-0.500" width="4" height="21" transform="rotate(0 10 10)"/><rect x="8" y="-0.500" width="4" height="21" transform="rotate(45 10 10)"/><rect x="8" y="-0.500" width="4" height="21" transform="rotate(90 10 10)"/><rect x="8" y="-0.500" width="4" height="21" transform="rotate(135 10 10)"/></g><circle cx="10" cy="10" r="2.800" fill="#d8d5ce"/></svg>
<svg class="b" style="left:1800px;top:183px;" width="8" height="5" viewBox="0 0 8 5"><path d="M0 0h8L4 4.500z" fill="#8a8781"/></svg>
<svg class="b" style="left:1823px;top:174.5px;" width="22" height="20" viewBox="0 0 22 20"><path d="M0 6.500h11" stroke="#55524d" stroke-width="2"/><path d="M8 2l5 4.500-5 4.500z" fill="#55524d"/><rect x="15.500" y="0.500" width="5" height="18" fill="#c9c6bf" stroke="#77746e" stroke-width="1.300"/></svg>
<div class="b" style="left:1203px;top:201px;width:653px;height:50px;background:#d6d3cc;"></div>
<svg class="b" style="left:1217px;top:213.5px;" width="23" height="24" viewBox="0 0 23 24"><rect x="1" y="1" width="21" height="22" fill="#f4f6fb" stroke="#4f67a8" stroke-width="2"/><path d="M10 6h10M10 12h10M10 18h10" stroke="#4f67a8" stroke-width="2"/><circle cx="6" cy="6" r="2.500" fill="#f2b33a"/><circle cx="6" cy="12" r="2.500" fill="#4fc04a"/><circle cx="6" cy="18" r="2.500" fill="#4a90e6"/></svg>
<svg class="b" style="left:1263.5px;top:211px;" width="12" height="29" viewBox="0 0 12 29"><text x="6" y="9.500" font-family="Liberation Sans, sans-serif" font-size="14" font-weight="bold" fill="#3a3fc4" text-anchor="middle">a</text><path d="M6 10.500v6M3 14l3 3.500 3-3.500z" stroke="#1f2f6a" stroke-width="1.300" fill="#1f2f6a"/><text x="6" y="28" font-family="Liberation Sans, sans-serif" font-size="14" font-weight="bold" fill="#c4201c" text-anchor="middle">z</text></svg>
<div class="b" style="left:1297.5px;top:208px;width:1.5px;height:38px;background:#9b9891;"></div>
<svg class="b" style="left:1315.5px;top:212.5px;" width="15" height="25" viewBox="0 0 15 25"><path d="M7.500 0 15 8h-4v6H4V8H0z" fill="#b23fd0"/><circle cx="7.500" cy="17.500" r="6" fill="#5fcf6a" stroke="#2f9a44" stroke-width="1.300"/><path d="M5 15h5M7.500 15v5M5 20h5" stroke="#1f5f2a" stroke-width="1.400"/></svg>
<svg class="b" style="left:1353.5px;top:213px;" width="24" height="24" viewBox="0 0 24 24"><circle cx="12" cy="12" r="11.300" fill="url(#rP)" stroke="#9a6ad0"/><text x="12" y="17.500" font-family="Liberation Sans, sans-serif" font-size="17" fill="#4a2f8a" text-anchor="middle">p</text></svg>
<div class="b" style="left:1387.5px;top:204.5px;width:43.5px;height:42.5px;background:#8c9ac4;border:2px solid #0a246a;"></div>
<svg class="b" style="left:1398px;top:215px;" width="24" height="24" viewBox="0 0 24 24"><circle cx="12" cy="12" r="11.300" fill="url(#rF)" stroke="#d59a2a"/><text x="12" y="18" font-family="Liberation Sans, sans-serif" font-size="17" fill="#4a3a1a" text-anchor="middle">f</text></svg>
<svg class="b" style="left:1443px;top:217.5px;" width="14" height="17" viewBox="0 0 14 17"><path d="M3.500 8V5.500a3.500 3.500 0 0 1 7 0V8" fill="none" stroke="#6a6a6a" stroke-width="2"/><rect x="1" y="8" width="12" height="8" fill="#e8a09a" stroke="#8a5a55" stroke-width="1.400"/><rect x="5.500" y="10.500" width="3" height="4" fill="#c03a30"/></svg>
<svg class="b" style="left:1483px;top:216px;" width="19" height="19" viewBox="0 0 19 19"><path d="M2.500 2.500 9.500 10 16.500 2.500M9.500 10v3" stroke="#3a3a3a" stroke-width="1.600" fill="none"/><rect x="0.500" y="0.500" width="4" height="4" fill="#cfe6ff" stroke="#3a6ab0"/><rect x="14.500" y="0.500" width="4" height="4" fill="#cfe6ff" stroke="#3a6ab0"/><rect x="6" y="11" width="7" height="7" fill="#f2e23a" stroke="#9a8a1a"/></svg>
<svg class="b" style="left:1524px;top:213.5px;" width="24" height="24" viewBox="0 0 24 24"><circle cx="12" cy="12" r="9" fill="none" stroke="#6ea6e8" stroke-width="5.500"/><circle cx="12" cy="12" r="11.500" fill="none" stroke="#4f86d0" stroke-width="0.800"/><circle cx="12" cy="12" r="6" fill="none" stroke="#c4dcf8" stroke-width="1.500"/></svg>
<svg class="b" style="left:1568px;top:212.5px;" width="23" height="26" viewBox="0 0 23 26"><path d="M1 5V1h21v4M1 21v4h21v-4" fill="none" stroke="#6a6a6a" stroke-width="1.600"/><path d="M11.500 6 17 12H6zM11.500 20 17 14H6z" fill="#3f8ee0"/></svg>
<svg class="b" style="left:1611px;top:213px;" width="23" height="27" viewBox="0 0 23 27"><path d="M0 11.500h23M0 15.500h23" stroke="#6a6a6a" stroke-width="1.500"/><path d="M11.500 8 17 1H6zM11.500 19 17 26H6z" fill="#3f8ee0"/></svg>
<div class="b" style="left:1649px;top:208px;width:1.5px;height:38px;background:#9b9891;"></div>
<div class="b" style="left:1653.5px;top:204.5px;width:43.5px;height:42.5px;background:#8c9ac4;border:2px solid #0a246a;"></div>
<svg class="b" style="left:1664.5px;top:213.5px;" width="25" height="27" viewBox="0 0 25 27"><path d="M1 15h23v11H1z" fill="url(#gYel)" stroke="#c9962a"/><path d="M12.500 0v17M6 11l6.500 7 6.500-7" fill="none" stroke="#2f6fd0" stroke-width="4"/><path d="M12.500 0v17M6 11l6.500 7 6.500-7" fill="none" stroke="#9fd0ff" stroke-width="1.500"/></svg>
<svg class="b" style="left:1705.5px;top:212px;" width="25" height="27" viewBox="0 0 25 27"><path d="M1 1h23v9H1z" fill="url(#gYel)" stroke="#c9962a"/><path d="M12.500 5v18M6 16l6.500 7 6.500-7" fill="none" stroke="#2f6fd0" stroke-width="4"/><path d="M12.500 5v18M6 16l6.500 7 6.500-7" fill="none" stroke="#9fd0ff" stroke-width="1.500"/></svg>
<div class="b" style="left:1203px;top:251px;width:653px;height:1200px;background:#fff;"></div>
<div class="b" style="left:1856px;top:167px;width:1.5px;height:1284px;background:#8c8a85;"></div>
<svg class="b" style="left:1208.5px;top:261.5px;" width="24" height="14" viewBox="0 0 24 14"><rect x="0.500" y="0.500" width="13" height="13" fill="#fff" stroke="#808080"/><path d="M3 7h8" stroke="#000" stroke-width="2"/><path d="M14 7h9" stroke="#6a6a6a" stroke-width="1.500"/></svg>
<div class="b" style="left:1249px;top:284px;width:1.5px;height:108px;background:#6a6a6a;"></div>
<div class="b" style="left:1249px;top:298.5px;width:17px;height:1.5px;background:#6a6a6a;"></div>
<div class="b" style="left:1249px;top:329.3px;width:17px;height:1.5px;background:#6a6a6a;"></div>
<div class="b" style="left:1249px;top:360.09999999999997px;width:17px;height:1.5px;background:#6a6a6a;"></div>
<div class="b" style="left:1249px;top:390.9px;width:17px;height:1.5px;background:#6a6a6a;"></div>
<svg class="b" style="left:1242.5px;top:254.5px;" width="26" height="25" viewBox="0 0 26 25"><circle cx="11" cy="13.500" r="10.500" fill="url(#rCls)" stroke="#6f9fe0"/><path d="M15.500 10.500a5.500 5.500 0 1 0 0 6.500" fill="none" stroke="#3d5fa8" stroke-width="2.200"/><path d="M16.500 1v10l-6-5z" fill="#e0302a"/><path d="M18 0.500v11l7-5.500z" fill="#2fae3a"/></svg>
<svg class="b" style="left:1273px;top:261px;" width="16" height="15" viewBox="0 0 16 15"><path d="M1.500 8V4.500a3.200 3.200 0 0 1 6.400 0V6" fill="none" stroke="#4a4f4a" stroke-width="1.700"/><rect x="4.800" y="6.300" width="10.400" height="7.400" fill="#8fd08a" stroke="#2f8a3a" stroke-width="1.600"/><rect x="8.300" y="8.600" width="3.400" height="3" fill="#e6f7e0"/></svg>
<div class="b" style="left:1298.5px;top:253px;width:173px;height:30px;border:1.500px dotted #000;"></div>
<span class="t" style="left:1298.6px;top:257.7px;font-size:20px;line-height:20px;letter-spacing:-0.350px;transform-origin:0 0;transform:scaleX(0.970);">StringCalculatorTest</span>
<svg class="b" style="left:1276.5px;top:285.7px;" width="26" height="25" viewBox="0 0 26 25"><circle cx="11" cy="13.500" r="10.500" fill="url(#rMeth)" stroke="#d9705a"/><text x="11" y="18.500" font-family="Liberation Sans, sans-serif" font-size="15" fill="#7a2a1c" text-anchor="middle">m</text></svg>
<svg class="b" style="left:1307px;top:291.8px;" width="16" height="15" viewBox="0 0 16 15"><path d="M1.500 8V4.500a3.200 3.200 0 0 1 6.400 0V6" fill="none" stroke="#4a4f4a" stroke-width="1.700"/><rect x="4.800" y="6.300" width="10.400" height="7.400" fill="#8fd08a" stroke="#2f8a3a" stroke-width="1.600"/><rect x="8.300" y="8.600" width="3.400" height="3" fill="#e6f7e0"/></svg>
<span class="t" style="left:1333.5px;top:288.5px;font-size:20px;line-height:20px;letter-spacing:-0.273px;">setup():void</span>
<svg class="b" style="left:1276.5px;top:316.5px;" width="26" height="25" viewBox="0 0 26 25"><circle cx="11" cy="13.500" r="10.500" fill="url(#rMeth)" stroke="#d9705a"/><text x="11" y="18.500" font-family="Liberation Sans, sans-serif" font-size="15" fill="#7a2a1c" text-anchor="middle">m</text><path d="M16.500 1v10l-6-5z" fill="#e0302a"/><path d="M18 0.500v11l7-5.500z" fill="#2fae3a"/></svg>
<svg class="b" style="left:1307px;top:322.6px;" width="16" height="15" viewBox="0 0 16 15"><path d="M1.500 8V4.500a3.200 3.200 0 0 1 6.400 0V6" fill="none" stroke="#4a4f4a" stroke-width="1.700"/><rect x="4.800" y="6.300" width="10.400" height="7.400" fill="#8fd08a" stroke="#2f8a3a" stroke-width="1.600"/><rect x="8.300" y="8.600" width="3.400" height="3" fill="#e6f7e0"/></svg>
<span class="t" style="left:1333.5px;top:319.3px;font-size:20px;line-height:20px;letter-spacing:-0.350px;transform-origin:0 0;transform:scaleX(0.984);">add_returns_0_for_empty_String():void</span>
<svg class="b" style="left:1276.5px;top:347.29999999999995px;" width="26" height="25" viewBox="0 0 26 25"><circle cx="11" cy="13.500" r="10.500" fill="url(#rMeth)" stroke="#d9705a"/><text x="11" y="18.500" font-family="Liberation Sans, sans-serif" font-size="15" fill="#7a2a1c" text-anchor="middle">m</text><path d="M16.500 1v10l-6-5z" fill="#e0302a"/><path d="M18 0.500v11l7-5.500z" fill="#2fae3a"/></svg>
<svg class="b" style="left:1307px;top:353.4px;" width="16" height="15" viewBox="0 0 16 15"><path d="M1.500 8V4.500a3.200 3.200 0 0 1 6.400 0V6" fill="none" stroke="#4a4f4a" stroke-width="1.700"/><rect x="4.800" y="6.300" width="10.400" height="7.400" fill="#8fd08a" stroke="#2f8a3a" stroke-width="1.600"/><rect x="8.300" y="8.600" width="3.400" height="3" fill="#e6f7e0"/></svg>
<span class="t" style="left:1333.5px;top:350.1px;font-size:20px;line-height:20px;letter-spacing:-0.350px;transform-origin:0 0;transform:scaleX(0.970);">add_returns_integer_value_of_single_number_String():void</span>
<svg class="b" style="left:1276.5px;top:378.09999999999997px;" width="26" height="25" viewBox="0 0 26 25"><circle cx="11" cy="13.500" r="10.500" fill="url(#rMeth)" stroke="#d9705a"/><text x="11" y="18.500" font-family="Liberation Sans, sans-serif" font-size="15" fill="#7a2a1c" text-anchor="middle">m</text><path d="M16.500 1v10l-6-5z" fill="#e0302a"/><path d="M18 0.500v11l7-5.500z" fill="#2fae3a"/></svg>
<svg class="b" style="left:1307px;top:384.2px;" width="16" height="15" viewBox="0 0 16 15"><path d="M1.500 8V4.500a3.200 3.200 0 0 1 6.400 0V6" fill="none" stroke="#4a4f4a" stroke-width="1.700"/><rect x="4.800" y="6.300" width="10.400" height="7.400" fill="#8fd08a" stroke="#2f8a3a" stroke-width="1.600"/><rect x="8.300" y="8.600" width="3.400" height="3" fill="#e6f7e0"/></svg>
<span class="t" style="left:1333.5px;top:380.9px;font-size:20px;line-height:20px;letter-spacing:-0.350px;transform-origin:0 0;transform:scaleX(0.965);">add_returns_integer_sum_of_multi_number_String():void</span>
<span class="t an" style="left:1231.2px;top:513.7px;font-size:34px;line-height:34px;color:#d1553b;font-weight:bold;letter-spacing:0.040px;">These tests act like the original</span>
<span class="t an" style="left:1231.2px;top:554.8px;font-size:34px;line-height:34px;color:#d1553b;font-weight:bold;letter-spacing:0.056px;">developer looking over your</span>
<span class="t an" style="left:1231.2px;top:595.9px;font-size:34px;line-height:34px;color:#d1553b;font-weight:bold;letter-spacing:0.114px;">shoulder and advising you, long</span>
<span class="t an" style="left:1231.2px;top:637.0px;font-size:34px;line-height:34px;color:#d1553b;font-weight:bold;letter-spacing:0.027px;">after that developer has left…</span>
<span class="t" style="left:162.7px;top:260.0px;font-size:20px;line-height:20px;letter-spacing:-0.350px;transform-origin:0 0;transform:rotate(-90deg) scaleX(0.990);"><u>1</u>: Project</span>
<svg class="b" style="left:162.5px;top:267px;" width="20" height="21" viewBox="0 0 20 21"><path d="M5 2h8v14c0 2-2 3-4 3H1" fill="none" stroke="#1f6fe8" stroke-width="4"/><rect x="15.500" y="0" width="4" height="20" fill="#1f6fe8"/><rect x="0" y="7" width="5" height="5" fill="#f08a1c"/></svg>
<span class="t" style="left:162.5px;top:1397.0px;font-size:20px;line-height:20px;letter-spacing:-0.350px;transform-origin:0 0;transform:rotate(-90deg) scaleX(0.992);"><u>2</u>: Favorites</span>
<svg class="b" style="left:161.5px;top:1403px;" width="23" height="22" viewBox="0 0 23 22"><path d="M11.500 0.800 14.800 7.800 22.300 8.600 16.700 13.800 18.300 21.300 11.500 17.500 4.700 21.300 6.300 13.800 0.700 8.600 8.200 7.800z" fill="url(#gYel)" stroke="#c9962a" stroke-width="1.200" stroke-linejoin="round"/></svg>
<div class="b" style="left:1857.5px;top:167px;width:37.5px;height:1284px;background:#d4d0c8;"></div>
<svg class="b" style="left:1864px;top:187.5px;" width="23" height="23" viewBox="0 0 23 23"><path d="M5 19.500h12.500l-1.500 3.300H6.500z" fill="#3f9a3a" stroke="#1f5a22" stroke-width="0.800"/><rect x="11" y="18.500" width="1.500" height="4" fill="#e6f5a0"/><path d="M3.500 11h15.500v4.500c0 3-3 4.800-7.800 4.800s-7.700-1.800-7.700-4.800z" fill="#f4d35a" stroke="#8a6a1a" stroke-width="0.800"/><path d="M6.500 15.500c2-1.300 7.500-1.300 9.500 0" stroke="#c98a1a" stroke-width="1.800" fill="none"/><rect x="4.500" y="8.800" width="13.500" height="3.800" fill="#3a3f7a"/><rect x="6.700" y="9.500" width="1.600" height="4.500" fill="#1f1f2a"/><rect x="14" y="9.500" width="1.600" height="4.500" fill="#1f1f2a"/><path d="M4.500 6h13.500l-1 3.300h-11.500z" fill="#d8402a"/><ellipse cx="11.200" cy="6.300" rx="2.200" ry="1.800" fill="#ffd0a0"/><path d="M0.500 7.500C0.500 2.500 5 0.500 11.200 0.500S22 2.500 22 7.500l-3.500 2-3-4h-8.500l-3 4z" fill="#3fa86a" stroke="#1f5a3a" stroke-width="0.800"/><path d="M4 3.300c3-1.600 11-1.600 14.500 0" stroke="#b5efd0" stroke-width="1.300" fill="none"/></svg>
<span class="t" style="left:1885.4px;top:215.9px;font-size:20px;line-height:20px;letter-spacing:-0.350px;transform-origin:0 0;transform:rotate(90deg) scaleX(0.928);">Commander</span>
<svg class="b" style="left:1864.5px;top:352.5px;" width="22" height="23" viewBox="0 0 22 23"><path d="M11 4 2 0M11 4l9-4M11 11H0M11 11h11M11 16l-9 6M11 16l9 6" stroke="#5a5a6a" stroke-width="1.400"/><ellipse cx="11" cy="5.500" rx="4" ry="4.500" fill="#a46af0"/><ellipse cx="11" cy="16" rx="5" ry="6.500" fill="#9a5aec"/><ellipse cx="11" cy="10.500" rx="3" ry="2.500" fill="#b88af5"/></svg>
<span class="t" style="left:1885.4px;top:380.9px;font-size:20px;line-height:20px;letter-spacing:-0.350px;transform-origin:0 0;transform:rotate(90deg) scaleX(0.935);">Ant Build</span>
<svg class="b" style="left:1864.5px;top:492.5px;" width="23" height="21" viewBox="0 0 23 21"><path d="M0.500 2.500h8l2 2h7v12h-17z" fill="#a9c4f0" stroke="#5a7ac0"/><rect x="6.500" y="7.500" width="15" height="12" fill="#f4f6fb" stroke="#5a6a9a"/><path d="M10 10v8M13.500 10v8M17 10v8M7 13h14" stroke="#6a7aa8" stroke-width="1.300"/></svg>
<span class="t" style="left:1885.4px;top:519.6px;font-size:20px;line-height:20px;letter-spacing:-0.350px;transform-origin:0 0;transform:rotate(90deg) scaleX(0.935);">Data Sources</span>
<svg class="b" style="left:1863px;top:670.5px;" width="23" height="23" viewBox="0 0 23 23"><path d="M17 3A9.500 9.500 0 1 0 17 20" fill="none" stroke="#a4d63a" stroke-width="4"/><path d="M8 2a10 10 0 0 1 12 3l-3 2.500M8 21a10 10 0 0 0 12-3l-3-2.500" fill="none" stroke="#2f9a5a" stroke-width="3"/><circle cx="11.500" cy="11.500" r="3.200" fill="#1f6a3a"/></svg>
<span class="t" style="left:1885.4px;top:703.0px;font-size:20px;line-height:20px;letter-spacing:-0.350px;transform-origin:0 0;transform:rotate(90deg) scaleX(0.941);">JetGradle</span>
<svg class="b" style="left:1864.5px;top:819px;" width="22" height="24" viewBox="0 0 22 24"><path d="M1 23c0-6 4-8 10-8s10 2 10 8z" fill="#3aa84a" stroke="#1f6a2a"/><circle cx="11" cy="9" r="6.500" fill="#f7c99a" stroke="#b5793a"/><path d="M4 8c0-5 3-7.500 7-7.500S18 3 18 8c-2-3-4-4-7-4S6 5 4 8z" fill="#e08a2a"/></svg>
<span class="t" style="left:1885.4px;top:850.0px;font-size:20px;line-height:20px;letter-spacing:-0.350px;transform-origin:0 0;transform:rotate(90deg) scaleX(0.968);">IDEtalk</span>
<svg class="b" style="left:1863px;top:950px;" width="23" height="23" viewBox="0 0 23 23"><g fill="none" stroke="#4f7ad8" stroke-width="1.600"><circle cx="11.500" cy="11.500" r="7.500"/><circle cx="11.500" cy="11.500" r="3.500"/><path d="M11.500 0.500v3.500" transform="rotate(0 11.500 11.500)"/><path d="M11.500 0.500v3.500" transform="rotate(36 11.500 11.500)"/><path d="M11.500 0.500v3.500" transform="rotate(72 11.500 11.500)"/><path d="M11.500 0.500v3.500" transform="rotate(108 11.500 11.500)"/><path d="M11.500 0.500v3.500" transform="rotate(144 11.500 11.500)"/><path d="M11.500 0.500v3.500" transform="rotate(180 11.500 11.500)"/><path d="M11.500 0.500v3.500" transform="rotate(216 11.500 11.500)"/><path d="M11.500 0.500v3.500" transform="rotate(252 11.500 11.500)"/><path d="M11.500 0.500v3.500" transform="rotate(288 11.500 11.500)"/><path d="M11.500 0.500v3.500" transform="rotate(324 11.500 11.500)"/></g><circle cx="11.500" cy="11.500" r="5.500" fill="#c4d6f8" opacity="0.700"/></svg>
<span class="t" style="left:1885.4px;top:982.0px;font-size:20px;line-height:20px;letter-spacing:-0.350px;transform-origin:0 0;transform:rotate(90deg) scaleX(0.947);">Maven Projects</span>
<div class="b" style="left:1861px;top:1131.5px;width:30px;height:157.5px;background:#bebab2;border:1.500px solid #8a8781;border-right-color:#f2f0ea;border-bottom-color:#f2f0ea;"></div>
<svg class="b" style="left:1864.5px;top:1152px;" width="23" height="22" viewBox="0 0 23 22"><circle cx="6.500" cy="6.500" r="5.500" fill="#f9c85a" stroke="#c9962a"/><circle cx="16.500" cy="6.500" r="5.500" fill="#f5925a" stroke="#c9622a"/><circle cx="11.500" cy="15.500" r="5.500" fill="#e85ad8" stroke="#a82a9a"/></svg>
<span class="t" style="left:1885.4px;top:1180.0px;font-size:20px;line-height:20px;letter-spacing:-0.350px;transform-origin:0 0;transform:rotate(90deg) scaleX(0.995);"><u>7</u>: Structure</span>
<div class="b" style="left:153px;top:1450.5px;width:1742px;height:1.5px;background:#8c8a85;"></div>
<div class="b" style="left:153px;top:1452px;width:1742px;height:41.5px;background:#d4d1ca;"></div>
<div class="b" style="left:153px;top:1493.5px;width:1742px;height:1.5px;background:#8f8c86;"></div>
<div class="b" style="left:153px;top:1495px;width:1742px;height:36px;background:#d4d1ca;"></div>
<div class="b" style="left:153px;top:1495px;width:39px;height:1.5px;background:#ffffff;"></div>
<svg class="b" style="left:216px;top:1463px;" width="20" height="22" viewBox="0 0 20 22"><path d="M1 1 19 11.0 1 21z" fill="url(#gGreen)" stroke="#1e8a22" stroke-width="1.500" stroke-linejoin="round"/></svg>
<span class="t" style="left:242.7px;top:1462.4px;font-size:20px;line-height:20px;letter-spacing:-0.350px;transform-origin:0 0;transform:scaleX(0.967);"><u>4</u>: Run</span>
<svg class="b" style="left:334px;top:1462px;" width="22" height="24" viewBox="0 0 22 24"><path d="M2 23c0-5 3-7 9-7s9 2 9 7z" fill="#3a8ae0" stroke="#1f5aa8"/><circle cx="12.500" cy="10" r="6.500" fill="#f7c99a" stroke="#b5793a"/><path d="M6 9c0-5 3-7 7-7s7 2.500 6.500 7c-2-3-4-3.500-7-3.500S8 6.500 6 9z" fill="#e07a1a"/><rect x="0.500" y="0.500" width="10" height="8" rx="2" fill="#f4f4f4" stroke="#7a7a7a"/><path d="M2.500 3.500h6M2.500 5.500h4" stroke="#5a5a5a" stroke-width="1"/></svg>
<span class="t" style="left:361.9px;top:1462.4px;font-size:20px;line-height:20px;letter-spacing:-0.350px;transform-origin:0 0;transform:scaleX(0.936);"><u>6</u>: TODO</span>
<svg class="b" style="left:1723.5px;top:1464.5px;" width="21" height="18" viewBox="0 0 21 18"><path d="M3 0h15a3 3 0 0 1 3 3v8a3 3 0 0 1-3 3h-4l-3 4v-4H3a3 3 0 0 1-3-3V3a3 3 0 0 1 3-3z" fill="#8d8a84"/></svg>
<span class="t" style="left:1753.3px;top:1462.5px;font-size:20px;line-height:20px;letter-spacing:-0.350px;transform-origin:0 0;transform:scaleX(0.959);">Event Log</span>
<div class="b" style="left:162px;top:1500.5px;width:24px;height:20px;background:#bfc2c6;border:2px solid #8a8a8a;"></div>
<div class="b" style="left:162px;top:1523px;width:24px;height:1.5px;background:#8a8a8a;"></div>
<span class="t" style="left:198.4px;top:1501.6px;font-size:20px;line-height:20px;letter-spacing:-0.350px;transform-origin:0 0;transform:scaleX(0.954);">Tests Passed: 3 passed (6 minutes ago)</span>
<div class="b" style="left:1176.2px;top:1496px;width:1.5px;height:33px;background:#8f8c86;"></div>
<div class="b" style="left:1177.7px;top:1496px;width:1.5px;height:33px;background:#f4f2ed;"></div>
<div class="b" style="left:1217px;top:1496px;width:1.5px;height:33px;background:#8f8c86;"></div>
<div class="b" style="left:1218.5px;top:1496px;width:1.5px;height:33px;background:#f4f2ed;"></div>
<div class="b" style="left:1384.5px;top:1496px;width:1.5px;height:33px;background:#8f8c86;"></div>
<div class="b" style="left:1386.0px;top:1496px;width:1.5px;height:33px;background:#f4f2ed;"></div>
<div class="b" style="left:1536px;top:1496px;width:1.5px;height:33px;background:#8f8c86;"></div>
<div class="b" style="left:1537.5px;top:1496px;width:1.5px;height:33px;background:#f4f2ed;"></div>
<div class="b" style="left:1652.4px;top:1496px;width:1.5px;height:33px;background:#8f8c86;"></div>
<div class="b" style="left:1653.9px;top:1496px;width:1.5px;height:33px;background:#f4f2ed;"></div>
<div class="b" style="left:1178px;top:1495.5px;width:570px;height:1.5px;background:#f4f2ed;"></div>
<svg class="b" style="left:1185px;top:1503px;" width="21" height="21" viewBox="0 0 21 21"><path d="M10.500 0.500v6" transform="rotate(0 10.500 10.500)" stroke="#8d8a84" stroke-width="1.600"/><path d="M10.500 0.500v6" transform="rotate(30 10.500 10.500)" stroke="#8d8a84" stroke-width="1.600"/><path d="M10.500 0.500v6" transform="rotate(60 10.500 10.500)" stroke="#8d8a84" stroke-width="1.600"/><path d="M10.500 0.500v6" transform="rotate(90 10.500 10.500)" stroke="#8d8a84" stroke-width="1.600"/><path d="M10.500 0.500v6" transform="rotate(120 10.500 10.500)" stroke="#8d8a84" stroke-width="1.600"/><path d="M10.500 0.500v6" transform="rotate(150 10.500 10.500)" stroke="#8d8a84" stroke-width="1.600"/><path d="M10.500 0.500v6" transform="rotate(180 10.500 10.500)" stroke="#8d8a84" stroke-width="1.600"/><path d="M10.500 0.500v6" transform="rotate(210 10.500 10.500)" stroke="#8d8a84" stroke-width="1.600"/><path d="M10.500 0.500v6" transform="rotate(240 10.500 10.500)" stroke="#8d8a84" stroke-width="1.600"/><path d="M10.500 0.500v6" transform="rotate(270 10.500 10.500)" stroke="#8d8a84" stroke-width="1.600"/><path d="M10.500 0.500v6" transform="rotate(300 10.500 10.500)" stroke="#8d8a84" stroke-width="1.600"/><path d="M10.500 0.500v6" transform="rotate(330 10.500 10.500)" stroke="#8d8a84" stroke-width="1.600"/></svg>
<span class="t" style="left:1281.2px;top:1501.8px;font-size:20px;line-height:20px;letter-spacing:-0.350px;transform-origin:0 0;transform:scaleX(0.971);">10:1</span>
<span class="t" style="left:1389.3px;top:1501.8px;font-size:20px;line-height:20px;letter-spacing:-0.350px;transform-origin:0 0;transform:scaleX(0.926);">UTF-8</span>
<svg class="b" style="left:1519px;top:1505px;" width="9" height="15" viewBox="0 0 9 15"><path d="M4.500 0 9 6H0zM4.500 15 9 9H0z" fill="#3f3f3f"/></svg>
<span class="t" style="left:1541.4px;top:1501.8px;font-size:20px;line-height:20px;letter-spacing:0.114px;">Insert</span>
<svg class="b" style="left:1669px;top:1502px;" width="13" height="19" viewBox="0 0 13 19"><path d="M2.800 5V3.800a3.300 3.300 0 0 1 6.600 0V9" fill="none" stroke="#9a9894" stroke-width="1.800"/><rect x="0.300" y="8.800" width="11.700" height="9.200" rx="1" fill="#8f8e8b"/><path d="M4.500 11.500h3.400M6.200 11.500v4" stroke="#b9b7b2" stroke-width="1.400"/></svg>
<svg class="b" style="left:1703px;top:1498.5px;" width="23" height="26" viewBox="0 0 23 26"><rect x="3.500" y="20.500" width="15" height="4.500" fill="#2e3038"/><rect x="10.300" y="21.300" width="1.500" height="2.500" fill="#e8e8f0"/><rect x="3" y="9.500" width="16.500" height="11" rx="3" fill="#f1e9e2"/><rect x="2.200" y="11" width="2.300" height="6" fill="#55504c"/><rect x="18" y="11" width="2.300" height="6" fill="#55504c"/><circle cx="8.300" cy="12.300" r="1.100" fill="#222"/><circle cx="14" cy="12.300" r="1.100" fill="#222"/><path d="M6 18c0.500-4 10-4 10.500 0c-2-2-8.500-2-10.500 0z" fill="#3c3432" stroke="#3c3432" stroke-width="1.200"/><rect x="8" y="13.500" width="6.500" height="1.800" fill="#f3c4bc"/><path d="M4.300 7.800c0-5 1.500-7.300 3.500-7.300h7c2 0 3.500 2.300 3.500 7.300z" fill="#3a3c46"/><rect x="0.300" y="7.300" width="22" height="2.300" rx="1.100" fill="#34363f"/><circle cx="11.300" cy="7" r="0.900" fill="#cfd6f0"/></svg>
<div class="b" style="left:1748px;top:1495.5px;width:147px;height:34px;background:linear-gradient(90deg,#7d92c4 0,#a9b4d2 41px,#c2c4ce 41px,#c6c7cf 106px,#d9d8d9 106px,#e9e7e3 130px,#d6d3cc 147px);"></div>
<div class="b" style="left:1748px;top:1495.5px;width:147px;height:34px;background:linear-gradient(rgba(255,255,255,0.250),rgba(255,255,255,0) 50%,rgba(0,0,0,0.050));"></div>
<span class="t" style="left:1763.3px;top:1501.8px;font-size:20px;line-height:20px;letter-spacing:-0.350px;transform-origin:0 0;transform:scaleX(0.936);">130M of 494M</span>
</body></html>
